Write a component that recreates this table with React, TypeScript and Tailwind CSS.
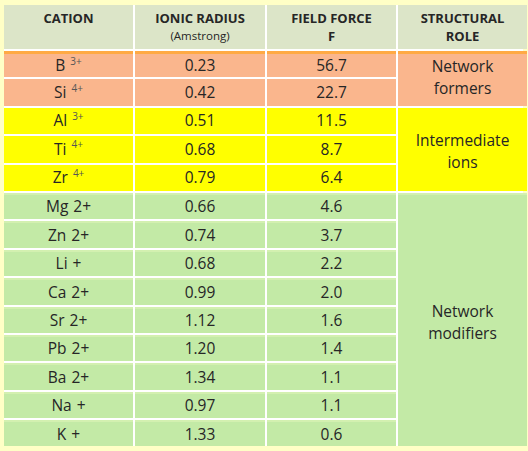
import React from "react";

type Row = {
  ion: string;
  charge: string;
  sup: boolean;
  radius: string;
  force: string;
  group: "former" | "inter" | "modifier";
};

const rows: Row[] = [
  { ion: "B", charge: "3+", sup: true, radius: "0.23", force: "56.7", group: "former" },
  { ion: "Si", charge: "4+", sup: true, radius: "0.42", force: "22.7", group: "former" },
  { ion: "Al", charge: "3+", sup: true, radius: "0.51", force: "11.5", group: "inter" },
  { ion: "Ti", charge: "4+", sup: true, radius: "0.68", force: "8.7", group: "inter" },
  { ion: "Zr", charge: "4+", sup: true, radius: "0.79", force: "6.4", group: "inter" },
  { ion: "Mg", charge: "2+", sup: false, radius: "0.66", force: "4.6", group: "modifier" },
  { ion: "Zn", charge: "2+", sup: false, radius: "0.74", force: "3.7", group: "modifier" },
  { ion: "Li", charge: "+", sup: false, radius: "0.68", force: "2.2", group: "modifier" },
  { ion: "Ca", charge: "2+", sup: false, radius: "0.99", force: "2.0", group: "modifier" },
  { ion: "Sr", charge: "2+", sup: false, radius: "1.12", force: "1.6", group: "modifier" },
  { ion: "Pb", charge: "2+", sup: false, radius: "1.20", force: "1.4", group: "modifier" },
  { ion: "Ba", charge: "2+", sup: false, radius: "1.34", force: "1.1", group: "modifier" },
  { ion: "Na", charge: "+", sup: false, radius: "0.97", force: "1.1", group: "modifier" },
  { ion: "K", charge: "+", sup: false, radius: "1.33", force: "0.6", group: "modifier" },
];

const bgFor = {
  former: "bg-[#fab68d]",
  inter: "bg-[#ffff00]",
  modifier: "bg-[#c3eaa6]",
};

const topFor = {
  former: "border-t-[0px]",
  inter: "border-t-[0px]",
  modifier: "border-t-[2px] border-t-[#d3f0b0]",
};

const App: React.FC = () => {
  return (
    <div
      className="w-[528px] h-[451px] bg-[#ffffc6] pt-[5px] pl-[4px] text-[#262626]"
      style={{ fontFamily: '"Open Sans", "Liberation Sans", sans-serif' }}
    >
      <div className="w-[519px] grid grid-cols-[129px_130px_129px_129px] grid-rows-[44px_repeat(14,26.4px)] gap-[2px] bg-white">
        {/* header */}
        <div className="bg-[#dce5c8] flex flex-col items-center pt-[4px] text-[13px] font-bold leading-[18px]">
          CATION
        </div>
        <div className="bg-[#dce5c8] flex flex-col items-center pt-[4px] text-[13px] font-bold leading-[18px]">
          <span>IONIC RADIUS</span>
          <span className="text-[11.5px] font-normal leading-[18px]">(Amstrong)</span>
        </div>
        <div className="bg-[#dce5c8] flex flex-col items-center pt-[4px] text-[13px] font-bold leading-[18px]">
          <span>FIELD FORCE</span>
          <span>F</span>
        </div>
        <div className="bg-[#dce5c8] flex flex-col items-center pt-[4px] text-[13px] font-bold leading-[18px]">
          <span>STRUCTURAL</span>
          <span>ROLE</span>
        </div>

        {rows.map((r, i) => {
          const bg = bgFor[r.group];
          const top = i === 0 ? "border-t-[3px] border-t-[#ffaa44]" : topFor[r.group];
          const cell = `${bg} ${top} flex items-center justify-center text-[15.5px] leading-none`;
          return (
            <React.Fragment key={r.ion}>
              <div className={cell} style={{ gridColumn: 1, gridRow: i + 2 }}>
                <span>{r.ion}</span>
                {r.sup ? (
                  <span className="ml-[5px] -mt-[10px] text-[10px] text-[#555]">{r.charge}</span>
                ) : (
                  <span className="ml-[5px]">{r.charge}</span>
                )}
              </div>
              <div className={cell} style={{ gridColumn: 2, gridRow: i + 2 }}>
                {r.radius}
              </div>
              <div className={cell} style={{ gridColumn: 3, gridRow: i + 2 }}>
                {r.force}
              </div>
            </React.Fragment>
          );
        })}

        <div className="col-start-4 row-start-2 row-span-2 bg-[#fab68d] border-t-[3px] border-t-[#ffaa44] flex flex-col items-center justify-center text-[15.5px] leading-[22px] pb-[6px]">
          <span>Network</span>
          <span>formers</span>
        </div>
        <div className="col-start-4 row-start-4 row-span-3 bg-[#ffff00] flex flex-col items-center justify-center text-[15.5px] leading-[22px] pt-[4px]">
          <span>Intermediate</span>
          <span>ions</span>
        </div>
        <div className="col-start-4 row-start-7 row-span-9 bg-[#c3eaa6] border-t-[2px] border-t-[#d3f0b0] flex flex-col items-center justify-center text-[15.5px] leading-[22px] pt-[2px]">
          <span>Network</span>
          <span>modifiers</span>
        </div>
      </div>
    </div>
  );
};

export default App;
